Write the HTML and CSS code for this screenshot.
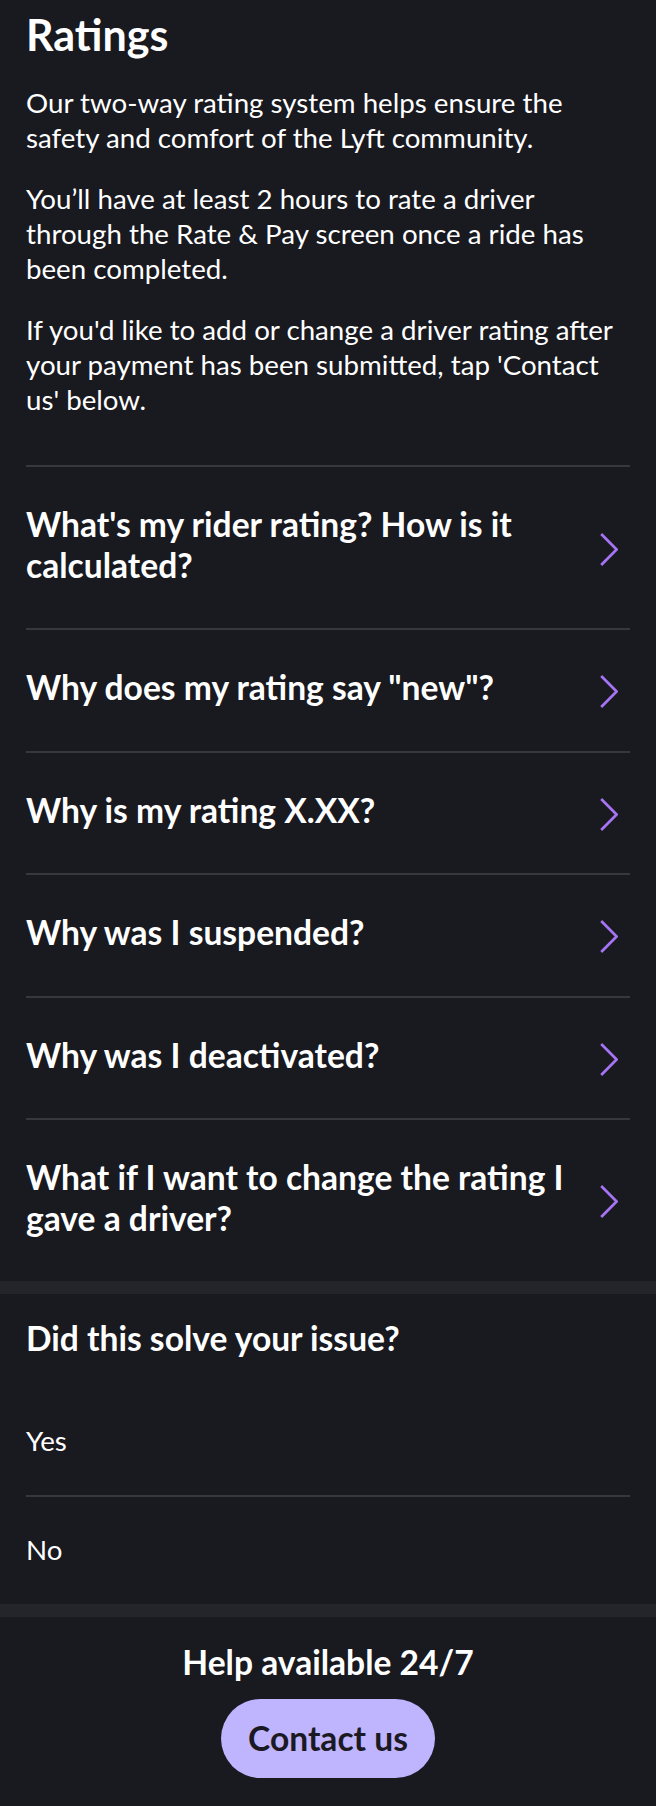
FILE: index.html
```html
<!DOCTYPE html>
<html lang="en">
<head>
<meta charset="utf-8">
<title>Ratings</title>
<link rel="stylesheet" href="styles.css">
</head>
<body>
<main class="page">
  <section class="intro">
    <h1 class="title">Ratings</h1>
    <p class="para">Our two-way rating system helps ensure the safety and comfort of the Lyft community.</p>
    <p class="para">You’ll have at least 2 hours to rate a driver through the Rate &amp; Pay screen once a ride has been completed.</p>
    <p class="para">If you'd like to add or change a driver rating after your payment has been submitted, tap 'Contact us' below.</p>
  </section>

  <ul class="questions">
    <li class="q-row"><span class="q-text">What's my rider rating? How is it calculated?</span><svg class="chev" width="18" height="33" viewBox="0 0 18 33"><polyline points="1.2,1 16.6,16.5 1.2,32" /></svg></li>
    <li class="q-row"><span class="q-text">Why does my rating say "new"?</span><svg class="chev" width="18" height="33" viewBox="0 0 18 33"><polyline points="1.2,1 16.6,16.5 1.2,32" /></svg></li>
    <li class="q-row"><span class="q-text">Why is my rating X.XX?</span><svg class="chev" width="18" height="33" viewBox="0 0 18 33"><polyline points="1.2,1 16.6,16.5 1.2,32" /></svg></li>
    <li class="q-row"><span class="q-text">Why was I suspended?</span><svg class="chev" width="18" height="33" viewBox="0 0 18 33"><polyline points="1.2,1 16.6,16.5 1.2,32" /></svg></li>
    <li class="q-row"><span class="q-text">Why was I deactivated?</span><svg class="chev" width="18" height="33" viewBox="0 0 18 33"><polyline points="1.2,1 16.6,16.5 1.2,32" /></svg></li>
    <li class="q-row"><span class="q-text">What if I want to change the rating I gave a driver?</span><svg class="chev" width="18" height="33" viewBox="0 0 18 33"><polyline points="1.2,1 16.6,16.5 1.2,32" /></svg></li>
  </ul>

  <section class="feedback">
    <h2 class="heading">Did this solve your issue?</h2>
    <ul class="options">
      <li class="opt">Yes</li>
      <li class="opt">No</li>
    </ul>
  </section>

  <section class="help">
    <h2 class="heading center">Help available 24/7</h2>
    <button class="contact" type="button">Contact us</button>
  </section>
</main>
</body>
</html>
```
FILE: styles.css
```css
html, body {
  margin: 0;
  padding: 0;
  background: #191920;
}
body {
  font-family: "Lato", "Liberation Sans", sans-serif;
  color: #ffffff;
}
.page {
  display: flex;
  flex-direction: column;
}
.intro {
  padding: 9px 26px 0;
}
.title {
  margin: 0;
  font-size: 43px;
  line-height: 52px;
  font-weight: 700;
}
.para {
  margin: 26px 0 0;
  font-size: 27.7px;
  line-height: 35px;
  font-weight: 400;
}
.title + .para {
  margin-top: 24px;
}
.questions {
  list-style: none;
  margin: 48px 26px 0;
  padding: 0;
}
.q-row {
  display: flex;
  align-items: center;
  gap: 24px;
  padding: 37px 12px 42.4px 0;
  border-top: 2px solid #37383d;
}
.q-text {
  flex: 1;
  font-size: 33.6px;
  line-height: 41px;
  font-weight: 700;
}
.chev {
  flex: none;
  margin-top: 8px;
}
.chev polyline {
  fill: none;
  stroke: #a674f4;
  stroke-width: 2.7;
}
.feedback {
  border-top: 13px solid #24252a;
  padding: 24px 26px 0;
}
.heading {
  margin: 0;
  font-size: 33.6px;
  line-height: 41px;
  font-weight: 700;
}
.options {
  list-style: none;
  margin: 29px 0 0;
  padding: 0;
}
.opt {
  font-size: 27.7px;
  line-height: 35px;
  padding: 35px 0 37px;
}
.opt + .opt {
  border-top: 2px solid #37383d;
}
.help {
  border-top: 13px solid #24252a;
  padding: 25px 26px 28px;
  display: flex;
  flex-direction: column;
  align-items: center;
  gap: 16px;
}
.center {
  text-align: center;
}
.contact {
  font-family: inherit;
  font-size: 33.6px;
  line-height: 41px;
  font-weight: 700;
  color: #1b1a22;
  background: #bfb4fe;
  border: none;
  border-radius: 40px;
  padding: 19px 27px;
  margin: 0;
}
```
